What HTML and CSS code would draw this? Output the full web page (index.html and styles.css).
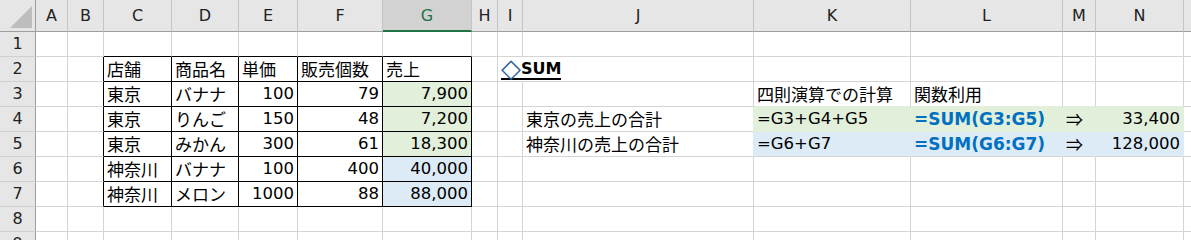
FILE: index.html
```html
<!DOCTYPE html>
<html lang="ja">
<head>
<meta charset="utf-8">
<title>SUM</title>
<link rel="stylesheet" href="styles.css">
</head>
<body>
<div class="sheet">
  <div class="corner"><svg class="tri" width="35" height="31" viewBox="0 0 35 31"><polygon points="32,6 32,28 10,28" fill="#bdbdbd"/></svg></div>
  <div class="ch">A</div><div class="ch">B</div><div class="ch">C</div><div class="ch">D</div><div class="ch">E</div><div class="ch">F</div><div class="ch sel">G</div><div class="ch">H</div><div class="ch">I</div><div class="ch">J</div><div class="ch">K</div><div class="ch">L</div><div class="ch">M</div><div class="ch">N</div><div class="ch x"></div>

  <div class="rh">1</div>
  <div></div><div></div><div class="tt"></div><div class="tt"></div><div class="tt"></div><div class="tt"></div><div class="tt"></div><div></div><div></div><div></div><div></div><div></div><div></div><div></div><div class="x"></div>

  <div class="rh">2</div>
  <div></div><div class="tl"></div>
  <div class="t ja">店舗</div><div class="t ja">商品名</div><div class="t ja">単価</div><div class="t ja">販売個数</div><div class="t ja">売上</div>
  <div></div><div class="ov head"><span class="hd"><span class="dia">◇</span>SUM</span></div><div></div><div></div><div></div><div></div><div></div><div class="x"></div>

  <div class="rh">3</div>
  <div></div><div class="tl"></div>
  <div class="t ja">東京</div><div class="t ja">バナナ</div><div class="t num">100</div><div class="t num">79</div><div class="t num g">7,900</div>
  <div></div><div></div><div></div><div class="ja gb">四則演算での計算</div><div class="ja gb">関数利用</div><div class="gb"></div><div class="gb"></div><div class="x"></div>

  <div class="rh">4</div>
  <div></div><div class="tl"></div>
  <div class="t ja">東京</div><div class="t ja">りんご</div><div class="t num">150</div><div class="t num">48</div><div class="t num g">7,200</div>
  <div></div><div></div><div class="ja gr">東京の売上の合計</div><div class="fg">=G3+G4+G5</div><div class="fg fx">=SUM(G3:G5)</div><div class="fg ja">⇒</div><div class="fg num">33,400</div><div class="x"></div>

  <div class="rh">5</div>
  <div></div><div class="tl"></div>
  <div class="t ja">東京</div><div class="t ja">みかん</div><div class="t num">300</div><div class="t num">61</div><div class="t num g">18,300</div>
  <div></div><div></div><div class="ja br">神奈川の売上の合計</div><div class="fb">=G6+G7</div><div class="fb fx">=SUM(G6:G7)</div><div class="fb ja">⇒</div><div class="fb num">128,000</div><div class="x"></div>

  <div class="rh">6</div>
  <div></div><div class="tl"></div>
  <div class="t ja">神奈川</div><div class="t ja">バナナ</div><div class="t num">100</div><div class="t num">400</div><div class="t num b">40,000</div>
  <div></div><div></div><div></div><div></div><div></div><div></div><div></div><div class="x"></div>

  <div class="rh">7</div>
  <div></div><div class="tl"></div>
  <div class="t ja">神奈川</div><div class="t ja">メロン</div><div class="t num">1000</div><div class="t num">88</div><div class="t num b">88,000</div>
  <div></div><div></div><div></div><div></div><div></div><div></div><div></div><div class="x"></div>

  <div class="rh">8</div>
  <div></div><div></div><div></div><div></div><div></div><div></div><div></div><div></div><div></div><div></div><div></div><div></div><div></div><div></div><div class="x"></div>

  <div class="rh">9</div>
  <div></div><div></div><div></div><div></div><div></div><div></div><div></div><div></div><div></div><div></div><div></div><div></div><div></div><div></div><div class="x"></div>
</div>
</body>
</html>
```
FILE: styles.css
```css
body {
  margin: 0;
  background: #fff;
  overflow: hidden;
}
.sheet {
  display: grid;
  grid-template-columns: 36px 32px 36px 68px 67px 59px 85px 89px 26px 25px 231px 157px 152px 33px 88px 8px;
  grid-template-rows: 32px repeat(9, 25px);
  width: 1192px;
  font-family: "DejaVu Sans", "Noto Sans CJK JP", sans-serif;
  font-size: 16.5px;
  color: #000;
}
:where(.sheet > div) {
  box-sizing: border-box;
  border-right: 1px solid #d4d4d4;
  border-bottom: 1px solid #d4d4d4;
  white-space: nowrap;
  line-height: 24px;
  padding: 0 3px;
  min-width: 0;
}
.corner {
  background: #e6e6e6;
  border-right: 1px solid #9e9e9e;
  border-bottom: 1px solid #9e9e9e;
  padding: 0;
}
.tri {
  display: block;
}
.ch {
  background: #e6e6e6;
  border-right: 1px solid #c4c4c4;
  border-bottom: 1px solid #9e9e9e;
  text-align: center;
  font-size: 16px;
  line-height: 31px;
  color: #222;
  padding: 0;
}
.sel {
  background: #d2d2d2;
  border-bottom: 2px solid #217346;
  color: #217346;
}
.rh {
  background: #e6e6e6;
  border-right: 1px solid #9e9e9e;
  border-bottom: 1px solid #cfcfcf;
  text-align: center;
  font-size: 16px;
  color: #222;
  padding: 0;
}
.x {
  border-right: none;
}
.t {
  border-right: 1px solid #000;
  border-bottom: 1px solid #000;
}
.tl {
  border-right: 1px solid #000;
}
.tt {
  border-bottom: 1px solid #000;
}
.ja {
  font-family: "Noto Sans CJK JP", sans-serif;
  font-size: 17px;
}
.num {
  text-align: right;
}
.g {
  background: #e2efda;
}
.b {
  background: #ddebf7;
}
.fg {
  background: #e2efda;
  border-right-color: #e2efda;
  border-bottom-color: #e2efda;
}
.fb {
  background: #ddebf7;
  border-right-color: #ddebf7;
}
.gb {
  border-bottom-color: #e2efda;
}
.gr {
  border-right-color: #e2efda;
}
.br {
  border-right-color: #ddebf7;
}
.fx {
  color: #0070c0;
  font-weight: bold;
  font-size: 17px;
}
.ov {
  border-right-color: #fff;
}
.head {
  font-weight: bold;
  font-size: 16px;
}
.hd {
  display: inline-block;
  line-height: 19px;
  border-bottom: 2px solid #000;
}
.dia {
  display: inline-block;
  font-weight: normal;
  font-size: 26px;
  line-height: 0;
  vertical-align: -3px;
  color: #2f5f9e;
}
```
